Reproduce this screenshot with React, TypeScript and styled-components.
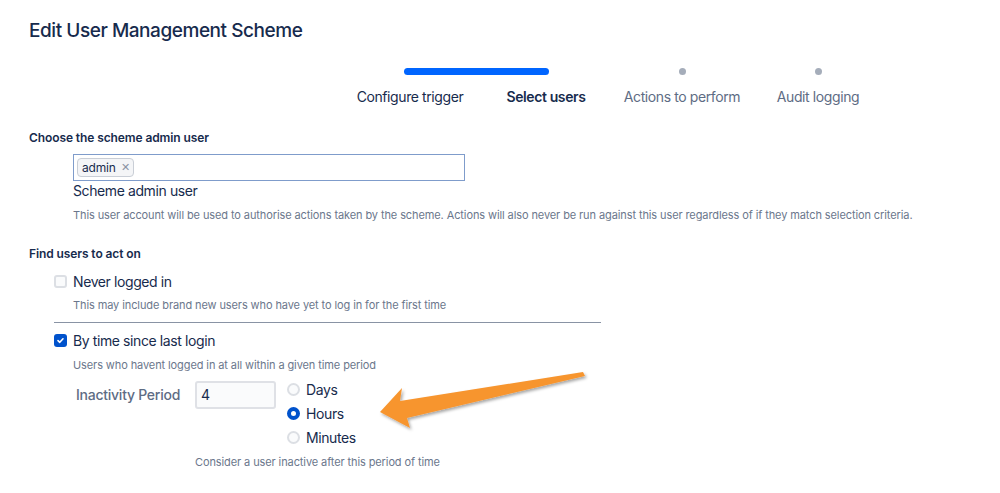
import React from "react";
import styled, { createGlobalStyle } from "styled-components";

const Global = createGlobalStyle`
  html, body { margin: 0; padding: 0; background: #ffffff; }
  body { font-family: Inter, "Noto Sans", "Liberation Sans", sans-serif; color: #172B4D; }
`;

const Page = styled.div`
  position: relative;
  width: 1000px;
  height: 493px;
  overflow: hidden;
  padding: 19px 0 0 29px;
  box-sizing: border-box;
`;

const Title = styled.h1`
  margin: 0;
  font-size: 19px;
  line-height: 24px;
  font-weight: 500;
  color: #172B4D;
  letter-spacing: -0.45px;
`;

const Tracker = styled.div`
  display: grid;
  grid-template-columns: repeat(4, 136px);
  margin: 24px 0 0 313px;
  row-gap: 12px;
`;

const ProgressBar = styled.div`
  grid-column: 1 / 3;
  grid-row: 1;
  height: 7px;
  margin: 0.5px 65px 0 62px;
  border-radius: 4px;
  background: #0065FF;
`;

const DotCell = styled.div<{ $col: number }>`
  grid-column: ${(p) => p.$col};
  grid-row: 1;
  display: flex;
  justify-content: center;
  align-items: center;
  height: 8px;
`;

const Dot = styled.span`
  width: 7px;
  height: 7px;
  border-radius: 50%;
  background: #A5ADBA;
`;

const StepLabel = styled.div<{ $state: "done" | "current" | "todo" }>`
  grid-row: 2;
  text-align: center;
  font-size: 14px;
  line-height: 20px;
  letter-spacing: -0.4px;
  font-weight: ${(p) => (p.$state === "current" ? 600 : 400)};
  color: ${(p) => (p.$state === "todo" ? "#5E6C84" : "#172B4D")};
`;

const SectionLabel = styled.div<{ $top: number }>`
  margin-top: ${(p) => p.$top}px;
  font-size: 12px;
  line-height: 16px;
  font-weight: 600;
  letter-spacing: -0.1px;
  color: #172B4D;
`;

const Indented = styled.div`
  padding-left: 44px;
  display: flex;
  flex-direction: column;
`;

const PickerBox = styled.div`
  margin-top: 8px;
  width: 392px;
  height: 27px;
  box-sizing: border-box;
  border: 1px solid #7F9CCB;
  background: #ffffff;
  display: flex;
  align-items: center;
  padding-left: 3px;
`;

const Tag = styled.span`
  display: inline-flex;
  align-items: center;
  gap: 5px;
  height: 19px;
  box-sizing: border-box;
  padding: 0 4px 0 4px;
  border: 1px solid #C9CED6;
  border-radius: 4px;
  background: #F4F5F7;
  font-size: 12px;
  letter-spacing: -0.2px;
  color: #172B4D;
`;

const TagX = styled.span`
  font-size: 11px;
  color: #8993A4;
  line-height: 1;
`;

const FieldName = styled.div`
  margin-top: 1px;
  font-size: 14px;
  line-height: 18px;
  letter-spacing: -0.4px;
  color: #172B4D;
`;

const Helper = styled.div<{ $top: number; $left?: number }>`
  margin-top: ${(p) => p.$top}px;
  margin-left: ${(p) => p.$left ?? 0}px;
  font-size: 11px;
  line-height: 14px;
  letter-spacing: -0.1px;
  color: #6B778C;
`;

const CheckRow = styled.label<{ $top: number }>`
  margin-top: ${(p) => p.$top}px;
  margin-left: -19px;
  display: flex;
  align-items: center;
  gap: 6px;
  height: 20px;
  font-size: 14px;
  letter-spacing: -0.4px;
  color: #172B4D;
`;

const Box = styled.span<{ $checked?: boolean }>`
  width: 13px;
  height: 13px;
  box-sizing: border-box;
  border-radius: 3px;
  border: ${(p) => (p.$checked ? "none" : "2px solid #DCDFE4")};
  background: ${(p) => (p.$checked ? "#0052CC" : "#FAFBFC")};
  display: flex;
  align-items: center;
  justify-content: center;
`;

const Divider = styled.hr`
  margin: 10px 0 0 -19px;
  width: 547px;
  border: none;
  border-top: 1px solid #8993A4;
  height: 0;
`;

const PeriodRow = styled.div`
  margin-top: 5px;
  display: flex;
  align-items: flex-start;
`;

const PeriodLabel = styled.div`
  width: 119px;
  margin-left: 3px;
  padding-top: 10px;
  font-size: 14px;
  line-height: 16px;
  font-weight: 500;
  letter-spacing: -0.25px;
  color: #5E6C84;
`;

const NumberBox = styled.div`
  margin-top: 4px;
  width: 81px;
  height: 28px;
  box-sizing: border-box;
  border: 2px solid #DFE1E6;
  border-radius: 3px;
  background: #FAFBFC;
  font-size: 14px;
  line-height: 24px;
  padding-left: 4px;
  color: #172B4D;
`;

const RadioGroup = styled.div`
  margin-left: 11px;
  display: flex;
  flex-direction: column;
`;

const RadioRow = styled.label`
  display: flex;
  align-items: center;
  gap: 6px;
  height: 24px;
  font-size: 14px;
  letter-spacing: -0.4px;
  color: #172B4D;
`;

const RadioCircle = styled.span<{ $checked?: boolean }>`
  width: 13px;
  height: 13px;
  box-sizing: border-box;
  border-radius: 50%;
  border: ${(p) => (p.$checked ? "4px solid #0052CC" : "2px solid #DCDFE4")};
  background: ${(p) => (p.$checked ? "#ffffff" : "#FAFBFC")};
`;

const ArrowOverlay = styled.svg`
  position: absolute;
  left: 370px;
  top: 360px;
  overflow: visible;
`;

const Check = () => (
  <svg width="9" height="9" viewBox="0 0 9 9">
    <path d="M2 4.6 L3.8 6.3 L7 2.8" fill="none" stroke="#fff" strokeWidth="1.6" strokeLinecap="round" strokeLinejoin="round" />
  </svg>
);

export default function App() {
  return (
    <>
      <Global />
      <Page>
        <Title>Edit User Management Scheme</Title>

        <Tracker>
          <ProgressBar />
          <DotCell $col={3}><Dot /></DotCell>
          <DotCell $col={4}><Dot /></DotCell>
          <StepLabel $state="done">Configure trigger</StepLabel>
          <StepLabel $state="current">Select users</StepLabel>
          <StepLabel $state="todo">Actions to perform</StepLabel>
          <StepLabel $state="todo">Audit logging</StepLabel>
        </Tracker>

        <SectionLabel $top={23}>Choose the scheme admin user</SectionLabel>
        <Indented>
          <PickerBox>
            <Tag>admin<TagX>✕</TagX></Tag>
          </PickerBox>
          <FieldName>Scheme admin user</FieldName>
          <Helper $top={8}>
            This user account will be used to authorise actions taken by the scheme. Actions will also never be run against this user regardless of if they match selection criteria.
          </Helper>
        </Indented>

        <SectionLabel $top={24}>Find users to act on</SectionLabel>
        <Indented>
          <CheckRow $top={9}>
            <Box />
            Never logged in
          </CheckRow>
          <Helper $top={7}>This may include brand new users who have yet to log in for the first time</Helper>
          <Divider />
          <CheckRow $top={7}>
            <Box $checked><Check /></Box>
            By time since last login
          </CheckRow>
          <Helper $top={8}>Users who havent logged in at all within a given time period</Helper>
          <PeriodRow>
            <PeriodLabel>Inactivity Period</PeriodLabel>
            <NumberBox>4</NumberBox>
            <RadioGroup>
              <RadioRow><RadioCircle />Days</RadioRow>
              <RadioRow><RadioCircle $checked />Hours</RadioRow>
              <RadioRow><RadioCircle />Minutes</RadioRow>
            </RadioGroup>
          </PeriodRow>
          <Helper $top={6} $left={122}>Consider a user inactive after this period of time</Helper>
        </Indented>

        <ArrowOverlay width="230" height="80" viewBox="0 0 230 80">
          <defs>
            <filter id="arrowShadow" x="-20%" y="-40%" width="140%" height="180%">
              <feDropShadow dx="1.5" dy="2" stdDeviation="1.5" floodColor="#000" floodOpacity="0.35" />
            </filter>
          </defs>
          <polygon
            points="10,52 32,28 30,41 213,12 215,16 37,58 40,68"
            fill="#F7952F"
            filter="url(#arrowShadow)"
          />
        </ArrowOverlay>
      </Page>
    </>
  );
}
